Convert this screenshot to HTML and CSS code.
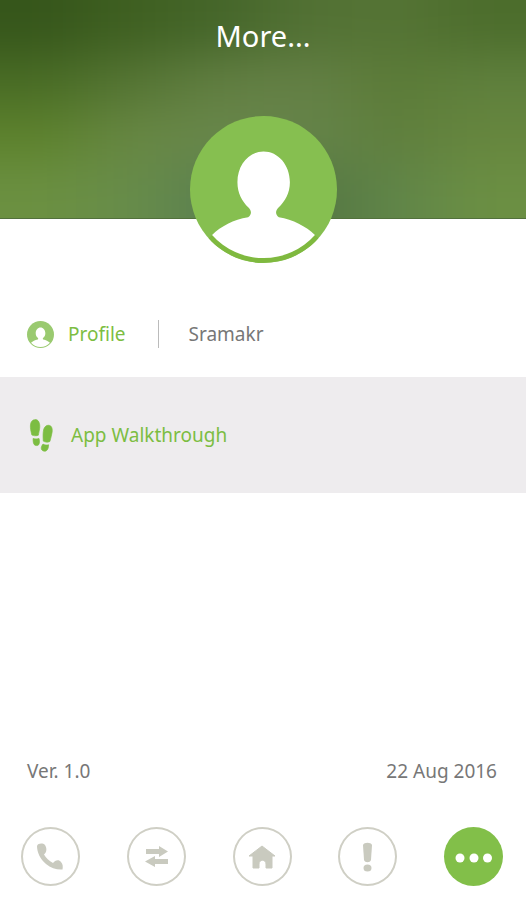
FILE: index.html
```html
<!DOCTYPE html>
<html lang="en">
<head>
<meta charset="utf-8">
<meta name="viewport" content="width=device-width, initial-scale=1">
<title>More</title>
<link rel="stylesheet" href="styles.css">
</head>
<body>
<header class="hero">
  <svg class="hero-backdrop" viewBox="0 0 600 400" preserveAspectRatio="none" aria-hidden="true">
    <defs>
      <filter id="soften" filterUnits="userSpaceOnUse" x="-200" y="-200" width="1000" height="800" color-interpolation-filters="sRGB">
        <feGaussianBlur stdDeviation="42"/>
      </filter>
    </defs>
    <g filter="url(#soften)">
      <path fill="#36561b" d="M-200-200H101V101H-200Z"/>
      <path fill="#3f6021" d="M100-200H201V101H100Z"/>
      <path fill="#45662a" d="M200-200H301V101H200Z"/>
      <path fill="#527134" d="M300-200H401V101H300Z"/>
      <path fill="#557435" d="M400-200H501V101H400Z"/>
      <path fill="#4c6d2c" d="M500-200H800V101H500Z"/>
      <path fill="#496c25" d="M-200 100H101V201H-200Z"/>
      <path fill="#557534" d="M100 100H201V201H100Z"/>
      <path fill="#617e41" d="M200 100H301V201H200Z"/>
      <path fill="#648046" d="M300 100H401V201H300Z"/>
      <path fill="#5b7b37" d="M400 100H501V201H400Z"/>
      <path fill="#5f803d" d="M500 100H800V201H500Z"/>
      <path fill="#5d822d" d="M-200 200H101V301H-200Z"/>
      <path fill="#678743" d="M100 200H201V301H100Z"/>
      <path fill="#69874b" d="M200 200H301V301H200Z"/>
      <path fill="#65844a" d="M300 200H401V301H300Z"/>
      <path fill="#5f7f3d" d="M400 200H501V301H400Z"/>
      <path fill="#66863e" d="M500 200H800V301H500Z"/>
      <path fill="#6b9041" d="M-200 300H101V600H-200Z"/>
      <path fill="#678c4a" d="M100 300H201V600H100Z"/>
      <path fill="#5b8050" d="M200 300H301V600H200Z"/>
      <path fill="#547642" d="M300 300H401V600H300Z"/>
      <path fill="#608549" d="M400 300H501V600H400Z"/>
      <path fill="#6b8f43" d="M500 300H800V600H500Z"/>
    </g>
  </svg>
  <h1 class="hero-title">More...</h1>
  <svg class="avatar" viewBox="0 0 440 440" aria-hidden="true">
    <circle cx="220" cy="220" r="220" fill="#86bf50"/>
    <path fill="none" stroke="#7fb93f" stroke-width="14" d="M61 361A213 213 0 0 0 379 361"/>
    <path fill="#fff" d="M220 106C264 106 299 146 299 198C299 232 284 255 265 274C255 284 255 294 266 303C308 310 347 330 374 356A206 206 0 0 1 66 356C93 330 130 310 174 303C185 294 185 284 175 274C156 255 142 232 142 198C142 146 176 106 220 106Z"/>
  </svg>
</header>
<main class="content">
  <div class="row profile">
    <a class="row-link" href="#profile">
      <svg class="profile-icon" viewBox="0 0 440 440" aria-hidden="true">
        <circle cx="220" cy="220" r="220" fill="#9aca70"/>
        <path fill="#fff" d="M220 106C264 106 299 146 299 198C299 232 284 255 265 274C255 284 255 294 266 303C308 310 347 330 374 356A206 206 0 0 1 66 356C93 330 130 310 174 303C185 294 185 284 175 274C156 255 142 232 142 198C142 146 176 106 220 106Z"/>
      </svg>
      <span>Profile</span>
    </a>
    <span class="user-name">Sramakr</span>
  </div>
  <a class="row walkthrough" href="#walkthrough">
    <svg class="steps-icon" viewBox="0 0 72 100" aria-hidden="true">
      <g fill="#7cbd42" stroke="#7cbd42" stroke-width="2">
        <path d="M18 2C28 0 34 14 32 28C31 36 29 42 28 49C21 52 12 51 8 48C6 38 3 28 4 18C5 8 10 2 18 2Z"/>
        <path d="M12 59C18 61 24 61 30 59C32 66 32 73 29 78C25 82 18 81 15 77C12 72 12 65 12 59Z"/>
        <path d="M57 19C67 18 71 27 70 38C69 49 65 58 63 68C56 72 48 70 43 67C42 55 42 48 43 38C44 27 49 20 57 19Z"/>
        <path d="M42 76C47 79 53 80 59 78C59 86 57 94 51 97C44 99 38 96 37 90C36 85 39 80 42 76Z"/>
      </g>
    </svg>
    <span>App Walkthrough</span>
  </a>
</main>
<footer class="footer">
  <div class="version">
    <span>Ver. 1.0</span>
    <time datetime="2016-08-22">22 Aug 2016</time>
  </div>
  <nav class="tabs" aria-label="Main">
    <a class="tab" href="#contact" aria-label="Contact">
      <svg viewBox="0 0 59 59" aria-hidden="true"><path d="M16 19C17 16 22 16 24 18C26 21 26 25 23 27.500C25 31 28 34 32 36C34 33 38 32 40 35C42 37 42 40 41.500 42.500C36 43 30 41 25 37C19 32 16 25 16 19Z"/></svg>
    </a>
    <a class="tab" href="#transfer" aria-label="Transfer">
      <svg viewBox="0 0 59 59" aria-hidden="true"><path d="M19 22H32V19L41 24.500L32 30V27H19ZM41 37H28V40L18 34.500L28 29V32H41Z"/></svg>
    </a>
    <a class="tab" href="#home" aria-label="Home">
      <svg viewBox="0 0 59 59" aria-hidden="true"><path stroke="#c9cabf" stroke-linejoin="round" d="M29 19L42 29H39V41H33V37C33 32 26 32 26 37V41H20V29H16Z"/></svg>
    </a>
    <a class="tab" href="#alerts" aria-label="Alerts">
      <svg viewBox="0 0 59 59" aria-hidden="true"><path d="M25 18C26 15 33 15 34 18L33 33C32 36 27 36 26 33Z"/><ellipse cx="29.500" cy="41" rx="4" ry="3.500"/></svg>
    </a>
    <a class="tab tab-active" href="#more" aria-label="More" aria-current="page">
      <svg viewBox="0 0 59 59" aria-hidden="true"><circle cx="16" cy="31" r="4.500"/><circle cx="30" cy="31" r="4.500"/><circle cx="43.500" cy="31" r="4.500"/></svg>
    </a>
  </nav>
</footer>
</body>
</html>
```
FILE: styles.css
```css
* {
  box-sizing: border-box;
}

body {
  margin: 0;
  min-height: 100vh;
  display: flex;
  flex-direction: column;
  background: #fff;
  color: #777;
  font-family: "Noto Sans", sans-serif;
  font-size: 19px;
  line-height: 28px;
}

a {
  color: #7cbd42;
  text-decoration: none;
}

svg {
  display: block;
}

.hero {
  position: relative;
  isolation: isolate;
  display: flex;
  flex-direction: column;
  align-items: center;
  justify-content: space-between;
  height: 219px;
  padding-top: 16px;
  border-bottom: 1px solid #52713c;
}

.hero-backdrop {
  position: absolute;
  inset: 0;
  z-index: -1;
  width: 100%;
  height: 100%;
}

.hero-title {
  margin: 0;
  color: #fff;
  font-size: 29px;
  font-weight: 400;
  line-height: 40px;
}

.avatar {
  flex: none;
  width: 147px;
  height: 147px;
  margin-bottom: -45px;
}

.row {
  display: flex;
  align-items: center;
  padding: 0 27px;
}

.profile {
  margin-top: 100px;
  height: 30px;
}

.row-link {
  display: flex;
  align-items: center;
  gap: 14px;
}

.profile-icon {
  width: 27px;
  height: 27px;
}

.user-name {
  margin-left: 32px;
  padding-left: 30px;
  border-left: 1px solid #bbb;
}

.walkthrough {
  gap: 16px;
  height: 116px;
  margin-top: 28px;
  background: #eeecee;
}

.steps-icon {
  width: 28px;
  height: 33px;
}

.footer {
  margin-top: auto;
}

.version {
  display: flex;
  justify-content: space-between;
  padding: 0 29px 0 27px;
}

.tabs {
  display: flex;
  justify-content: space-between;
  padding: 42px 23px 14px 21px;
}

.tab {
  width: 59px;
  height: 59px;
  border-radius: 50%;
  box-shadow: inset 0 0 0 2px #cfcfc5;
  fill: #c9cabf;
}

.tab-active {
  background: #82bf49;
  box-shadow: none;
  fill: #fff;
}
```
